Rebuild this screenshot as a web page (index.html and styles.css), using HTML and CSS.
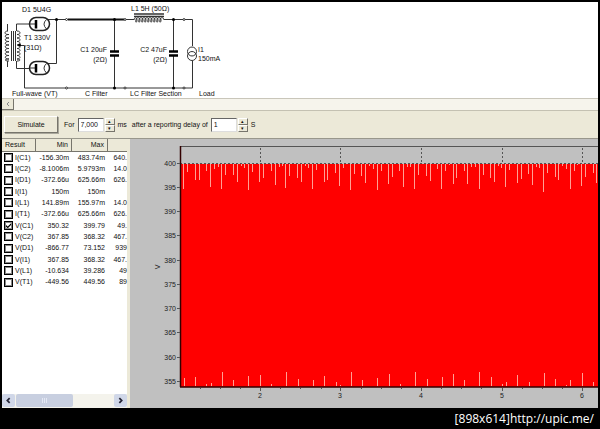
FILE: index.html
```html
<!DOCTYPE html>
<html lang="en">
<head>
<meta charset="utf-8">
<title>Power supply designer</title>
<link rel="stylesheet" href="styles.css">
</head>
<body>
<main class="window">
  <section class="schematic">
    <svg class="circuit" viewBox="2 2 596 96" role="img" aria-label="Circuit">
      <g class="wire">
        <path d="M7.500 24v7M7.500 61v6M16.500 31v-7H32M16.500 61v7.500H32"/>
        <path class="core" d="M11.500 31v30M13.500 31v30M15.500 31v30"/>
        <path d="M8 31c-4 0-4 3.500 0 3.500h1c-5 0-5 3.500 0 3.500c-5 0-5 3.500 0 3.500c-5 0-5 3.500 0 3.500c-5 0-5 3.500 0 3.500c-5 0-5 3.500 0 3.500c-5 0-5 3.500 0 3.500c-5 0-5 3.500 0 3.500c-5 0-5 2 0 2"/>
        <path d="M17 31c4 0 4 3.500 0 3.500c4 0 4 3.500 0 3.500c4 0 4 3.500 0 3.500c4 0 4 3.500 0 3.500c4 0 4 3.500 0 3.500c4 0 4 3.500 0 3.500c4 0 4 3.500 0 3.500c4 0 4 3.500 0 3.500c4 0 4 2 0 2"/>
        <path d="M19 45.500h5.500v42.500H192.500V61M192.500 46V19.500H164M134 19.500H56.500V63.500H46M46 19.500H57"/>
        <path class="thick" d="M68 19.500h56"/>
        <path d="M114.500 19v32M114.500 56v32M173.500 19v32M173.500 56v32"/>
        <g class="tube">
          <rect x="29.500" y="17.500" width="20" height="13" rx="6.500"/>
          <rect x="29.500" y="61.500" width="20" height="13" rx="6.500"/>
        </g>
        <path d="M30 24h6M30 68h6M46.500 19.500q-5 4.500 0 9.500M46.500 63.500q-5 4.500 0 9.500"/>
        <path class="plate" d="M36 20v8.500M36 64v8.500"/>
        <path class="plate" d="M110 51.500h9M110 55.500h9M169 51.500h9M169 55.500h9"/>
        <path class="bar" d="M134 14h30M134 16.500h30"/>
        <path d="M134 20c0-3 3-3 3 0c0 3-2 3-1 0c0-3 4-3 4 0c0 3-2 3-1 0c0-3 4-3 4 0c0 3-2 3-1 0c0-3 4-3 4 0c0 3-2 3-1 0c0-3 4-3 4 0c0 3-2 3-1 0c0-3 4-3 4 0c0 3-2 3-1 0c0-3 4-3 4 0c0 3-2 3-1 0c0-3 4-3 4 0c0 3-2 3-1 0c0-3 4-3 4 0c0 3-2 3-1 0c0-3 4-3 4 0"/>
        <circle cx="192" cy="51.500" r="4.500"/>
        <circle cx="192" cy="56" r="4.500"/>
      </g>
      <g class="joint">
        <circle cx="19.500" cy="45" r="1.500"/><circle cx="56.500" cy="19.500" r="1.500"/>
        <circle cx="114.500" cy="19.500" r="1.500"/><circle cx="173.500" cy="19.500" r="1.500"/>
        <circle cx="114.500" cy="88" r="1.500"/><circle cx="173.500" cy="88" r="1.500"/>
      </g>
      <g class="terminal">
        <circle cx="66.500" cy="19.500" r="1"/><circle cx="125" cy="19.500" r="1"/><circle cx="184" cy="19.500" r="1"/>
        <circle cx="66.500" cy="88" r="1"/><circle cx="125" cy="88" r="1"/><circle cx="184" cy="88" r="1"/>
      </g>
      <g class="part">
        <text x="22" y="12">D1 5U4G</text>
        <text x="24" y="40">T1 330V</text>
        <text x="24" y="50">(31Ω)</text>
        <text x="107" y="52" text-anchor="end">C1 20uF</text>
        <text x="107" y="62" text-anchor="end">(2Ω)</text>
        <text x="131" y="11">L1 5H (50Ω)</text>
        <text x="167" y="52" text-anchor="end">C2 47uF</text>
        <text x="167" y="62" text-anchor="end">(2Ω)</text>
        <text x="198" y="52">I1</text>
        <text x="198" y="61">150mA</text>
        <text x="12" y="96">Full-wave (VT)</text>
        <text x="85" y="96">C Filter</text>
        <text x="130" y="96">LC Filter Section</text>
        <text x="199" y="96">Load</text>
      </g>
    </svg>
  </section>
  <div class="strip"><button class="strip-arrow" aria-label="Scroll left"><svg viewBox="0 0 6 6"><path d="M4 1L2 3l2 2"/></svg></button></div>
  <form class="toolbar">
    <button class="simulate" type="button">Simulate</button>
    <label for="duration">For</label>
    <span class="spin">
      <input id="duration" type="text" value="7,000">
      <span class="steps"><button type="button" aria-label="Longer">▴</button><button type="button" aria-label="Shorter">▾</button></span>
    </span>
    <span class="unit">ms</span>
    <label class="delay-label" for="delay">after a reporting delay of</label>
    <span class="spin">
      <input id="delay" type="text" value="1">
      <span class="steps"><button type="button" aria-label="More delay">▴</button><button type="button" aria-label="Less delay">▾</button></span>
    </span>
    <span class="unit">S</span>
  </form>
  <div class="lower">
    <section class="results">
      <table>
        <colgroup><col class="c-name"><col class="c-num"><col class="c-num"><col class="c-rest"></colgroup>
        <thead><tr><th>Result</th><th>Min</th><th>Max</th><th></th></tr></thead>
        <tbody>
          <tr><td><label><input type="checkbox">I(C1)</label></td><td>-156.30m</td><td>483.74m</td><td>640.</td></tr>
          <tr><td><label><input type="checkbox">I(C2)</label></td><td>-8.1006m</td><td>5.9793m</td><td>14.0</td></tr>
          <tr><td><label><input type="checkbox">I(D1)</label></td><td>-372.66u</td><td>625.66m</td><td>626.</td></tr>
          <tr><td><label><input type="checkbox">I(I1)</label></td><td>150m</td><td>150m</td><td></td></tr>
          <tr><td><label><input type="checkbox">I(L1)</label></td><td>141.89m</td><td>155.97m</td><td>14.0</td></tr>
          <tr><td><label><input type="checkbox">I(T1)</label></td><td>-372.66u</td><td>625.66m</td><td>626.</td></tr>
          <tr><td><label><input type="checkbox" checked>V(C1)</label></td><td>350.32</td><td>399.79</td><td>49.</td></tr>
          <tr><td><label><input type="checkbox">V(C2)</label></td><td>367.85</td><td>368.32</td><td>467.</td></tr>
          <tr><td><label><input type="checkbox">V(D1)</label></td><td>-866.77</td><td>73.152</td><td>939</td></tr>
          <tr><td><label><input type="checkbox">V(I1)</label></td><td>367.85</td><td>368.32</td><td>467.</td></tr>
          <tr><td><label><input type="checkbox">V(L1)</label></td><td>-10.634</td><td>39.286</td><td>49</td></tr>
          <tr><td><label><input type="checkbox">V(T1)</label></td><td>-449.56</td><td>449.56</td><td>89</td></tr>
        </tbody>
      </table>
      <div class="hscroll">
        <button aria-label="Scroll left"><svg viewBox="0 0 6 6"><path d="M4 1L2 3l2 2"/></svg></button>
        <span class="thumb"><i></i><i></i><i></i></span>
        <button aria-label="Scroll right"><svg viewBox="0 0 6 6"><path d="M2 1l2 2-2 2"/></svg></button>
      </div>
    </section>
    <section class="plot">
      <svg class="chart" viewBox="130 139 468 269" role="img" aria-label="V(C1) plot">
        <path class="grid" d="M260.500 148v15M340.500 148v15M421.500 148v15M502.500 148v15M582.500 148v15"/>
        <path class="frame" d="M180 146.500H598"/>
        <rect class="area" x="180" y="164" width="418" height="223"/>
        <path class="grid" d="M180 163.500H598"/>
        <path class="ripple" transform="translate(.5 0)" d="M183 164V189M187 164V172M195 164V180M199 164V180M206 164V171M210 164V187M214 164V169M218 164V167M221 164V189M225 164V175M233 164V175M237 164V182M241 164V166M244 164V168M248 164V190M252 164V172M259 164V182M263 164V178M271 164V171M275 164V185M279 164V167M282 164V166M285 164V188M289 164V176M297 164V178M301 164V182M305 164V166M308 164V168M312 164V189M316 164V170M324 164V182M327 164V180M335 164V173M339 164V186M343 164V168M350 164V190M354 164V174M361 164V176M365 164V183M369 164V166M373 164V169M377 164V190M381 164V171M388 164V184M392 164V177M399 164V171M403 164V187M407 164V167M410 164V167M414 164V189M418 164V175M426 164V176M430 164V181M437 164V169M441 164V189M445 164V171M449 164V165M453 164V184M456 164V178M464 164V171M467 164V184M471 164V167M475 164V167M479 164V189M483 164V175M490 164V178M494 164V182M498 164V166M501 164V168M505 164V187M509 164V170M517 164V183M521 164V179M528 164V174M532 164V185M536 164V167M539 164V168M543 164V192M547 164V173M555 164V177M558 164V180M562 164V166M566 164V169M570 164V189M574 164V171M577 164V165M581 164V186M585 164V177M593 164V173M596 164V183"/>
        <path class="ripple" transform="translate(-.5 0)" d="M185 386V378M196 386V377M207 386V384M212 386V383M223 386V372M234 386V380M249 386V376M261 386V375M272 386V384M287 386V372M299 386V379M314 386V380M325 386V376M337 386V382M341 386V385M352 386V372M363 386V380M378 386V378M390 386V374M401 386V384M416 386V372M428 386V379M443 386V377M454 386V374M465 386V380M480 386V372M492 386V377M503 386V384M507 386V382M518 386V375M530 386V382M545 386V373M556 386V379M567 386V385M571 386V380M583 386V373M594 386V382"/>
        <path class="axis" d="M180.500 146V387M180 387H598"/>
        <path class="tick" d="M177 163.500h3M177 187.500h3M177 211.500h3M177 235.500h3M177 260.500h3M177 284.500h3M177 308.500h3M177 332.500h3M177 357.500h3M177 381.500h3M200.500 388v1M220.500 388v1M240.500 388v1M260.500 388v3M280.500 388v1M300.500 388v1M321.500 388v1M340.500 388v3M361.500 388v1M381.500 388v1M401.500 388v1M421.500 388v3M441.500 388v1M461.500 388v1M481.500 388v1M502.500 388v3M522.500 388v1M542.500 388v1M562.500 388v1M582.500 388v3"/>
        <g class="scale" text-anchor="end">
          <text x="176" y="166">400</text><text x="176" y="190">395</text><text x="176" y="214">390</text>
          <text x="176" y="238">385</text><text x="176" y="263">380</text><text x="176" y="287">375</text>
          <text x="176" y="311">370</text><text x="176" y="335">365</text><text x="176" y="360">360</text>
          <text x="176" y="384">355</text>
        </g>
        <g class="scale" text-anchor="middle">
          <text x="260" y="398">2</text><text x="340" y="398">3</text><text x="421" y="398">4</text>
          <text x="502" y="398">5</text><text x="582" y="398">6</text>
          <text transform="translate(160 267) rotate(-90)">V</text>
        </g>
      </svg>
    </section>
  </div>
</main>
<footer class="caption">[898x614]http://upic.me/</footer>
</body>
</html>
```

FILE: styles.css
```css
* { box-sizing: border-box; }
body {
  margin: 0;
  padding: 2px 2px 0;
  background: #000;
  color: #111;
  font: 7px/10px "Liberation Sans", Arial, sans-serif;
}
button, input { margin: 0; padding: 0; font: inherit; color: inherit; border: 0; }
svg { display: block; }

.window { background: #ece9d8; }
.schematic { background: #fff; overflow: hidden; }
.circuit { width: 596px; max-width: 100%; }
.wire { fill: none; stroke: #333; stroke-width: 1; }
.thick { stroke: #111; stroke-width: 2; }
.tube { fill: #fff; stroke: #222; stroke-width: 1.5; }
.core { stroke: #333; }
.bar { stroke: #333; stroke-width: 1.5; }
.plate { stroke: #000; stroke-width: 2.5; }
.joint { fill: #000; }
.terminal { fill: #fff; stroke: #333; }
.part text { fill: #111; }

.strip { height: 13px; background: #f6f4ec; border-top: 1px solid #c9c6ba; border-bottom: 1px solid #c4c1b2; }
.strip-arrow { display: block; width: 12px; height: 11px; padding: 2px 3px; background: #ece9d8; border-right: 1px solid #77756c; border-bottom: 1px solid #77756c; }
.strip-arrow svg { width: 6px; height: 6px; fill: none; stroke: #888; }

.toolbar { display: flex; align-items: center; height: 28px; padding: 0 2px; border-bottom: 1px solid #99978c; }
.simulate { width: 54px; height: 17px; margin-right: 6px; background: #ece9d8; border: 1px solid; border-color: #fff #77756c #77756c #fff; box-shadow: 1px 1px 0 #aaa89c; }
.spin { display: flex; gap: 1px; margin: 0 3px; }
.spin input { width: 26px; height: 14px; padding: 0 2px; background: #fff; border: 1px solid; border-color: #666 #ddd #ddd #666; }
.steps { display: grid; width: 10px; height: 14px; }
.steps button { height: 7px; overflow: hidden; font-size: 5px; line-height: 5px; background: #ece9d8; border: 1px solid; border-color: #fff #77756c #77756c #fff; }
.delay-label { margin-left: 5px; }

.lower { display: flex; }
.results { display: flex; flex-direction: column; flex: 0 0 125px; background: #fff; }
.results table { width: 100%; height: 149px; table-layout: fixed; border-collapse: separate; border-spacing: 0; }
.c-name { width: 34px; }
.c-num { width: 36px; }
th { height: 13px; padding: 0 3px; font-weight: normal; text-align: right; background: #ece9d8; border-right: 1px solid #77756c; border-bottom: 1px solid #77756c; }
th:first-child { text-align: left; }
th:last-child { border-right: 0; }
td { padding: 0 3px 0 0; text-align: right; white-space: nowrap; }
td:last-child { padding: 0; }
td label { display: flex; align-items: center; gap: 2px; padding-left: 2px; }
td input { appearance: none; flex: none; width: 9px; height: 9px; background: #fff; border: 1px solid #000; box-shadow: inset 0 0 0 1px #888; }
td input:checked::after { content: ""; display: block; width: 5px; height: 5px; margin: 1px; background: #000; clip-path: polygon(0 35%, 35% 65%, 100% 0, 100% 35%, 35% 100%, 0 70%); }
.hscroll { display: flex; gap: 1px; margin-top: auto; padding-bottom: 1px; background: #f4f3ec; }
.hscroll button { width: 13px; height: 13px; padding: 3px; background: #d0d7e8; border-radius: 2px; }
.hscroll button:last-child { margin-left: auto; }
.hscroll svg { width: 7px; height: 7px; fill: none; stroke: #223; stroke-width: 1.5; }
.thumb { display: flex; justify-content: center; align-items: center; gap: 1px; width: 57px; background: #c8cfe0; border-radius: 2px; }
.thumb i { width: 1px; height: 5px; background: #e4e8f4; }

.plot { flex: 1; min-width: 0; margin-left: 3px; background: #c0c0c0; }
.chart { width: 100%; }
.grid { fill: none; stroke: #555; stroke-dasharray: 2 2; }
.frame { fill: none; stroke: #555; }
.area { fill: #f00; }
.ripple { fill: none; stroke: #ffa094; }
.axis { fill: none; stroke: #300; stroke-width: 1.5; }
.tick { fill: none; stroke: #555; }
.scale text { fill: #222; }

.caption { padding: 3px 4px 0; color: #fff; font: 12px/16px "Open Sans", "Noto Sans", sans-serif; text-align: right; }
```
